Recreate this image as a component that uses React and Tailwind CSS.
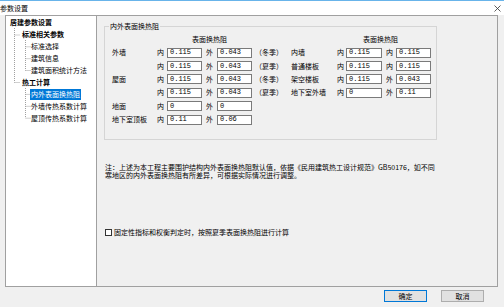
import React from "react";

const cjk = "font-['Noto_Sans_CJK_SC','Noto_Sans',sans-serif]";

const tree = [
  { label: "居建参数设置", level: 0, bold: true },
  { label: "标准相关参数", level: 1, bold: true },
  { label: "标准选择", level: 2 },
  { label: "建筑信息", level: 2 },
  { label: "建筑面积统计方法", level: 2 },
  { label: "热工计算", level: 1, bold: true },
  { label: "内外表面换热阻", level: 2, selected: true },
  { label: "外墙传热系数计算", level: 2 },
  { label: "屋顶传热系数计算", level: 2 },
];

const leftRows = [
  { name: "外墙", a: "内", v1: "0.115", b: "外", v2: "0.043", note: "（冬季）" },
  { name: "", a: "内", v1: "0.115", b: "外", v2: "0.043", note: "（夏季）" },
  { name: "屋面", a: "内", v1: "0.115", b: "外", v2: "0.043", note: "（冬季）" },
  { name: "", a: "内", v1: "0.115", b: "外", v2: "0.043", note: "（夏季）" },
  { name: "地面", a: "内", v1: "0", b: "外", v2: "0", note: "" },
  { name: "地下室顶板", a: "内", v1: "0.11", b: "外", v2: "0.06", note: "" },
];

const rightRows = [
  { name: "内墙", a: "内", v1: "0.115", b: "内", v2: "0.115" },
  { name: "普通楼板", a: "内", v1: "0.115", b: "内", v2: "0.115" },
  { name: "架空楼板", a: "内", v1: "0.115", b: "外", v2: "0.043" },
  { name: "地下室外墙", a: "内", v1: "0", b: "外", v2: "0.11" },
];

function Field({ value, w = "w-[35px]" }) {
  return (
    <div
      className={`${w} h-[10px] bg-white border border-[#7a7a7a] flex items-center pl-[2px] font-['Liberation_Mono',monospace] text-[7px] leading-none`}
    >
      {value}
    </div>
  );
}

function TreeLines() {
  const c = "#a0a0a0";
  const d = "1 1";
  return (
    <svg className="absolute left-0 top-0" width="92" height="130">
      <g stroke={c} strokeDasharray={d} strokeWidth="1" fill="none">
        <path d="M8.5 12V66.5M8.5 19H14M8.5 66.5H14" />
        <path d="M19.5 24V54.5M19.5 30.8H25M19.5 42.7H25M19.5 54.5H25" />
        <path d="M19.5 72V102M19.5 78.4H25M19.5 90.3H25M19.5 102.2H25" />
      </g>
    </svg>
  );
}

export default function App() {
  return (
    <div className={`w-[504px] h-[307px] bg-[#f0f0f0] text-black text-[7px] leading-none overflow-hidden ${cjk}`}>
      <div className="h-[15px] bg-white border-t border-[#68b4ea] flex items-center justify-between pr-[3px]">
        <span className="text-[7px]">参数设置</span>
        <svg width="7" height="7" viewBox="0 0 7 7">
          <path d="M0.5 0.5L6.5 6.5M6.5 0.5L0.5 6.5" stroke="#333" strokeWidth="0.8" />
        </svg>
      </div>

      <div className="flex pl-[5px] pr-[6px] h-[272px]">
        <div className="relative w-[92px] bg-white border border-[#a0a0a0] pt-[1px]">
          <TreeLines />
          {tree.map((t) => (
            <div
              key={t.label}
              className={`h-[11.9px] flex items-center ${
                t.level === 0 ? "pl-[3px]" : t.level === 1 ? "pl-[15px]" : "pl-[24px]"
              }`}
            >
              <span
                className={`px-[1px] h-[11px] flex items-center ${t.bold ? "font-bold" : ""} ${
                  t.selected ? "bg-[#0078d7] text-white" : ""
                }`}
              >
                {t.label}
              </span>
            </div>
          ))}
        </div>

        <div className="flex-1 border-y border-r border-[#a0a0a0] pl-[7px] pt-[10px]">
          <div className="relative w-[333px] h-[114px] border border-[#d5d5d5] pt-[6px]">
            <span className="absolute left-[4px] top-[-4px] bg-[#f0f0f0] px-[1px]">内外表面换热阻</span>
            <div className="flex">
              <div className="w-[186px] pl-[7px]">
                <div className="h-[13px] flex items-center pl-[80px]">表面换热阻</div>
                {leftRows.map((r, i) => (
                  <div key={i} className="h-[13.4px] flex items-center">
                    <span className="w-[45px]">{r.name}</span>
                    <span className="w-[10px]">{r.a}</span>
                    <Field value={r.v1} />
                    <span className="w-[15px] pl-[4px]">{r.b}</span>
                    <Field value={r.v2} />
                    <span className="pl-[3px]">{r.note}</span>
                  </div>
                ))}
              </div>
              <div className="flex-1">
                <div className="h-[13px] flex items-center pl-[72px]">表面换热阻</div>
                {rightRows.map((r, i) => (
                  <div key={i} className="h-[13.4px] flex items-center">
                    <span className="w-[46px]">{r.name}</span>
                    <span className="w-[9px]">{r.a}</span>
                    <Field value={r.v1} w="w-[36px]" />
                    <span className="w-[14px] pl-[4px]">{r.b}</span>
                    <Field value={r.v2} />
                  </div>
                ))}
              </div>
            </div>
          </div>

          <p className="mt-[24px] pl-[1px] w-[340px] leading-[7.5px]">
            注：上述为本工程主要围护结构内外表面换热阻默认值，依据《民用建筑热工设计规范》GB50176，如不同
            <br />
            寒地区的内外表面换热阻有所差异，可根据实际情况进行调整。
          </p>

          <label className="mt-[50px] pl-[1px] flex items-center gap-[2px]">
            <span className="w-[7px] h-[7px] bg-white border border-[#333]" />
            <span>固定性指标和权衡判定时，按照夏季表面换热阻进行计算</span>
          </label>
        </div>
      </div>

      <div className="flex justify-end gap-[14px] pr-[20px] pt-[3px]">
        <button className="w-[43px] h-[12px] bg-[#e1e1e1] border border-[#0078d7] flex items-center justify-center text-[7px]">
          确定
        </button>
        <button className="w-[43px] h-[12px] bg-[#e1e1e1] border border-[#adadad] flex items-center justify-center text-[7px]">
          取消
        </button>
      </div>
    </div>
  );
}
